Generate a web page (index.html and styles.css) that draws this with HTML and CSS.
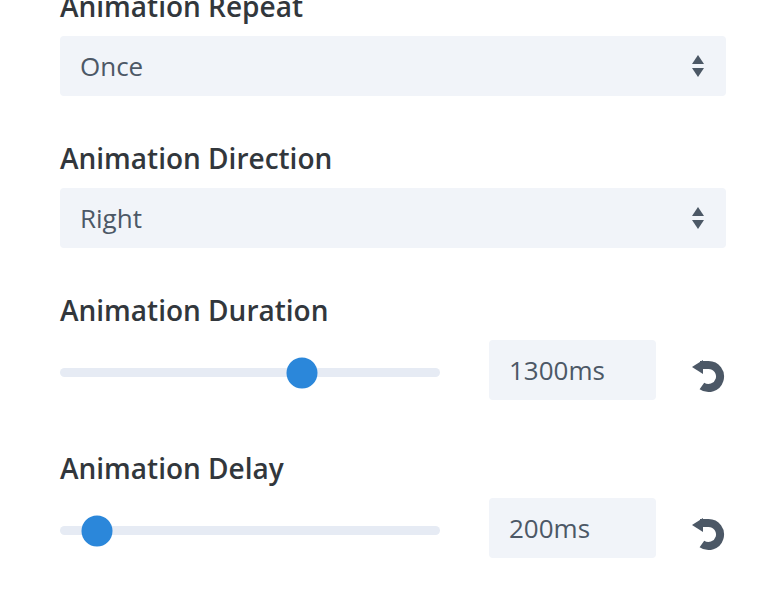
FILE: index.html
```html
<!DOCTYPE html>
<html lang="en">
<head>
  <meta charset="UTF-8">
  <title>Animation Settings</title>
  <link rel="stylesheet" href="styles.css">
</head>
<body>
  <div class="panel">
    <!-- Repeat -->
    <div class="field">
      <label class="field-label">Animation Repeat</label>
      <div class="select">
        <span>Once</span>
        <svg class="select-arrows" width="12" height="23" viewBox="0 0 12 23">
          <polygon points="0,9 6,0 12,9" />
          <polygon points="0,13 12,13 6,22" />
        </svg>
      </div>
    </div>

    <!-- Direction -->
    <div class="field">
      <label class="field-label">Animation Direction</label>
      <div class="select">
        <span>Right</span>
        <svg class="select-arrows" width="12" height="23" viewBox="0 0 12 23">
          <polygon points="0,9 6,0 12,9" />
          <polygon points="0,13 12,13 6,22" />
        </svg>
      </div>
    </div>

    <!-- Duration -->
    <div class="field field-range">
      <label class="field-label">Animation Duration</label>
      <div class="range-row">
        <div class="track">
          <div class="thumb" style="left: 63.8%"></div>
        </div>
        <div class="value-box">1300ms</div>
        <svg class="reset" width="33" height="33" viewBox="0 0 33 33">
          <path d="M8 5 H16.5 A11.5 11.5 0 1 1 9.9 25.9" />
          <polygon points="0,7 11,0 11,14" />
        </svg>
      </div>
    </div>

    <!-- Delay -->
    <div class="field field-range">
      <label class="field-label">Animation Delay</label>
      <div class="range-row">
        <div class="track">
          <div class="thumb" style="left: 9.7%"></div>
        </div>
        <div class="value-box">200ms</div>
        <svg class="reset" width="33" height="33" viewBox="0 0 33 33">
          <path d="M8 5 H16.5 A11.5 11.5 0 1 1 9.9 25.9" />
          <polygon points="0,7 11,0 11,14" />
        </svg>
      </div>
    </div>
  </div>
</body>
</html>
```

FILE: styles.css
```css
body {
  margin: 0;
  padding: 0;
  background: #fff;
  font-family: 'Open Sans', 'Noto Sans', sans-serif;
}

.panel {
  margin-top: -10px;
  padding-left: 60px;
  width: 666px;
}

.field {
  margin-bottom: 46px;
}

.field-range {
  margin-bottom: 52px;
}

.field-label {
  display: block;
  font-size: 28px;
  line-height: 32px;
  font-weight: 600;
  color: #32373c;
  margin-bottom: 14px;
}

.select {
  height: 60px;
  box-sizing: border-box;
  background: #f1f4f9;
  border-radius: 4px;
  padding: 0 22px 0 20px;
  display: flex;
  align-items: center;
  justify-content: space-between;
  font-size: 26px;
  color: #4c5866;
}

.select-arrows {
  fill: #4c5866;
}

.range-row {
  display: flex;
  align-items: center;
}

.track {
  position: relative;
  width: 380px;
  height: 9px;
  margin-top: 5px;
  border-radius: 5px;
  background: #e6ebf4;
}

.thumb {
  position: absolute;
  top: 50%;
  width: 31px;
  height: 31px;
  border-radius: 50%;
  background: #2b87da;
  transform: translate(-50%, -50%);
}

.value-box {
  margin-left: 49px;
  width: 167px;
  height: 60px;
  box-sizing: border-box;
  padding-left: 20px;
  background: #f1f4f9;
  border-radius: 4px;
  display: flex;
  align-items: center;
  font-size: 26px;
  color: #4c5866;
}

.reset {
  margin-left: 36px;
  margin-top: 13px;
  fill: #4c5866;
}

.reset path {
  fill: none;
  stroke: #4c5866;
  stroke-width: 8;
}
```
